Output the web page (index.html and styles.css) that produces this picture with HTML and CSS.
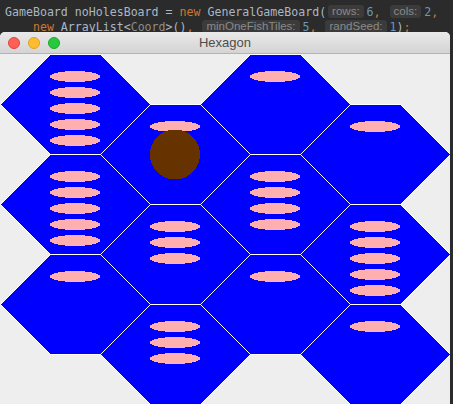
FILE: index.html
```html
<!DOCTYPE html>
<html>
<head>
<meta charset="utf-8">
<link rel="stylesheet" href="styles.css">
</head>
<body>
<div class="editor">
<div class="line l1"><span class="id">GameBoard noHolesBoard = </span><span class="kw">new</span><span class="id"> GeneralGameBoard(</span><span class="hint">rows:</span><span class="num">6</span><span class="kw">,</span> <span class="hint">cols:</span><span class="num">2</span><span class="kw">,</span></div>
<div class="line l2">    <span class="kw">new</span><span class="id"> ArrayList&lt;</span><span class="gen">Coord</span><span class="id">&gt;()</span><span class="kw">,</span> <span class="hint">minOneFishTiles:</span><span class="num">5</span><span class="kw">,</span> <span class="hint">randSeed:</span><span class="num">1</span><span class="id">)</span><span class="kw">;</span></div>
</div>

<div class="window">
  <div class="titlebar">
    <div class="lights">
      <span class="light red"></span>
      <span class="light yellow"></span>
      <span class="light green"></span>
    </div>
    <div class="title">Hexagon</div>
  </div>
  <div class="content">
    <svg class="board" width="450" height="350" viewBox="0 0 450 350">
      <defs>
        <polygon id="hex" points="0.5,50.5 50.5,0.5 100.5,0.5 150.5,50.5 100.5,100.5 50.5,100.5"/>
      </defs>
      <g transform="translate(0,0)">
        <use href="#hex" class="tile"/>
        <ellipse class="fish" cx="75" cy="22.5" rx="25" ry="5.5"/>
        <ellipse class="fish" cx="75" cy="38.5" rx="25" ry="5.5"/>
        <ellipse class="fish" cx="75" cy="54.5" rx="25" ry="5.5"/>
        <ellipse class="fish" cx="75" cy="70.5" rx="25" ry="5.5"/>
        <ellipse class="fish" cx="75" cy="86.5" rx="25" ry="5.5"/>
      </g>
      <g transform="translate(200,0)">
        <use href="#hex" class="tile"/>
        <ellipse class="fish" cx="75" cy="22.5" rx="25" ry="5.5"/>
      </g>
      <g transform="translate(100,50)">
        <use href="#hex" class="tile"/>
        <ellipse class="fish" cx="75" cy="22.5" rx="25" ry="5.5"/>
        <circle class="penguin" cx="75" cy="50.5" r="25"/>
      </g>
      <g transform="translate(300,50)">
        <use href="#hex" class="tile"/>
        <ellipse class="fish" cx="75" cy="22.5" rx="25" ry="5.5"/>
      </g>
      <g transform="translate(0,100)">
        <use href="#hex" class="tile"/>
        <ellipse class="fish" cx="75" cy="22.5" rx="25" ry="5.5"/>
        <ellipse class="fish" cx="75" cy="38.5" rx="25" ry="5.5"/>
        <ellipse class="fish" cx="75" cy="54.5" rx="25" ry="5.5"/>
        <ellipse class="fish" cx="75" cy="70.5" rx="25" ry="5.5"/>
        <ellipse class="fish" cx="75" cy="86.5" rx="25" ry="5.5"/>
      </g>
      <g transform="translate(200,100)">
        <use href="#hex" class="tile"/>
        <ellipse class="fish" cx="75" cy="22.5" rx="25" ry="5.5"/>
        <ellipse class="fish" cx="75" cy="38.5" rx="25" ry="5.5"/>
        <ellipse class="fish" cx="75" cy="54.5" rx="25" ry="5.5"/>
        <ellipse class="fish" cx="75" cy="70.5" rx="25" ry="5.5"/>
      </g>
      <g transform="translate(100,150)">
        <use href="#hex" class="tile"/>
        <ellipse class="fish" cx="75" cy="22.5" rx="25" ry="5.5"/>
        <ellipse class="fish" cx="75" cy="38.5" rx="25" ry="5.5"/>
        <ellipse class="fish" cx="75" cy="54.5" rx="25" ry="5.5"/>
      </g>
      <g transform="translate(300,150)">
        <use href="#hex" class="tile"/>
        <ellipse class="fish" cx="75" cy="22.5" rx="25" ry="5.5"/>
        <ellipse class="fish" cx="75" cy="38.5" rx="25" ry="5.5"/>
        <ellipse class="fish" cx="75" cy="54.5" rx="25" ry="5.5"/>
        <ellipse class="fish" cx="75" cy="70.5" rx="25" ry="5.5"/>
        <ellipse class="fish" cx="75" cy="86.5" rx="25" ry="5.5"/>
      </g>
      <g transform="translate(0,200)">
        <use href="#hex" class="tile"/>
        <ellipse class="fish" cx="75" cy="22.5" rx="25" ry="5.5"/>
      </g>
      <g transform="translate(200,200)">
        <use href="#hex" class="tile"/>
        <ellipse class="fish" cx="75" cy="22.5" rx="25" ry="5.5"/>
      </g>
      <g transform="translate(100,250)">
        <use href="#hex" class="tile"/>
        <ellipse class="fish" cx="75" cy="22.5" rx="25" ry="5.5"/>
        <ellipse class="fish" cx="75" cy="38.5" rx="25" ry="5.5"/>
        <ellipse class="fish" cx="75" cy="54.5" rx="25" ry="5.5"/>
      </g>
      <g transform="translate(300,250)">
        <use href="#hex" class="tile"/>
        <ellipse class="fish" cx="75" cy="22.5" rx="25" ry="5.5"/>
      </g>
    </svg>
  </div>
</div>
</body>
</html>
```

FILE: styles.css
```css
html, body {
  margin: 0;
  padding: 0;
}
body {
  width: 453px;
  height: 404px;
  overflow: hidden;
  background: #2b2b2b;
  position: relative;
}
.editor {
  padding: 5px 0 0 5px;
  font-family: "DejaVu Sans Mono", "Liberation Mono", monospace;
  font-size: 11.6px;
  line-height: 15px;
  color: #a9b7c6;
}
.line {
  white-space: pre;
  height: 15px;
}
.id { color: #a9b7c6; }
.kw { color: #cc7832; }
.num { color: #6897bb; }
.gen {
  color: #8c8c8c;
  text-decoration: underline dotted #8c8c8c;
  text-underline-offset: 2px;
}
.hint {
  display: inline-block;
  font-family: "Liberation Sans", Arial, sans-serif;
  font-size: 11.5px;
  line-height: 13px;
  padding: 0 4px;
  margin: 0 3px 0 2px;
  border-radius: 3px;
  background: #3b3b3b;
  color: #8a8a8a;
  vertical-align: 1px;
}

.window {
  position: absolute;
  left: 0;
  top: 32px;
  width: 450px;
  height: 380px;
  background: #eeeeee;
  border-radius: 5px 5px 0 0;
  overflow: hidden;
}
.titlebar {
  height: 21px;
  border-bottom: 1px solid #b3b3b3;
  background: linear-gradient(#e9e9e9, #d4d4d4);
  display: flex;
  align-items: center;
  position: relative;
}
.lights {
  display: flex;
  gap: 8px;
  padding-left: 8px;
}
.light {
  width: 12px;
  height: 12px;
  border-radius: 50%;
  box-sizing: border-box;
}
.red { background: #fe5f57; border: 0.5px solid #e0443e; }
.yellow { background: #febc2e; border: 0.5px solid #dea123; }
.green { background: #28c840; border: 0.5px solid #1aab29; }
.title {
  position: absolute;
  left: 0;
  right: 0;
  top: 0;
  text-align: center;
  font-family: "Liberation Sans", Arial, sans-serif;
  font-size: 13px;
  line-height: 21px;
  color: #4d4d4d;
}
.content {
  background: #eeeeee;
}
.board {
  display: block;
}
.tile {
  fill: #0000ff;
  stroke: #ffffff;
  stroke-width: 1;
  shape-rendering: crispEdges;
}
.fish {
  fill: #ffafaf;
  shape-rendering: crispEdges;
}
.penguin {
  fill: #663300;
  shape-rendering: crispEdges;
}
```
